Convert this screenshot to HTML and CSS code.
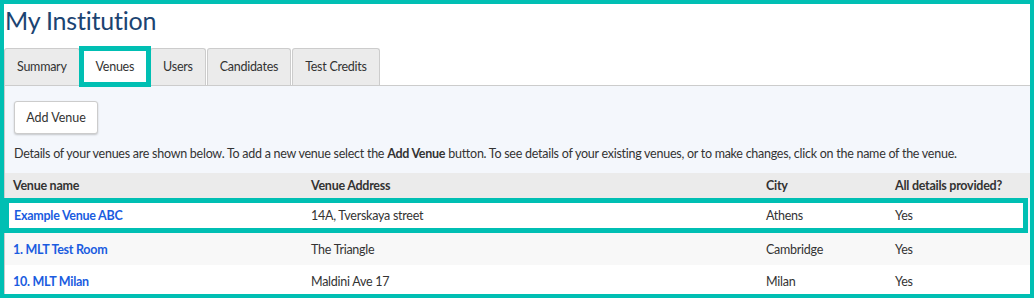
FILE: index.html
```html
<!DOCTYPE html>
<html lang="en">
  <head>
    <meta charset="UTF-8" />
    <meta name="viewport" content="width=device-width, initial-scale=1.0" />
    <title>My Institution</title>
    <link rel="stylesheet" href="styles.css">
  </head>
  <body>
    <div class="frame">
      <!-- Page title -->
      <h1>My Institution</h1>

      <!-- Tabs -->
      <nav class="tabs">
        <a class="tab" href="#">Summary</a>
        <a class="tab active" href="#">Venues</a>
        <a class="tab" href="#">Users</a>
        <a class="tab" href="#">Candidates</a>
        <a class="tab" href="#">Test Credits</a>
      </nav>

      <!-- Venues panel -->
      <section class="panel">
        <div class="intro">
          <button class="btn">Add Venue</button>
          <p>Details of your venues are shown below. To add a new venue select the <strong>Add Venue</strong> button. To see details of your existing venues, or to make changes, click on the name of the venue.</p>
        </div>

        <div class="venues">
          <div class="row head">
            <span>Venue name</span>
            <span>Venue Address</span>
            <span>City</span>
            <span>All details provided?</span>
          </div>
          <div class="row selected">
            <a href="#">Example Venue ABC</a>
            <span>14A, Tverskaya street</span>
            <span>Athens</span>
            <span>Yes</span>
          </div>
          <div class="row alt">
            <a href="#">1. MLT Test Room</a>
            <span>The Triangle</span>
            <span>Cambridge</span>
            <span>Yes</span>
          </div>
          <div class="row">
            <a href="#">10. MLT Milan</a>
            <span>Maldini Ave 17</span>
            <span>Milan</span>
            <span>Yes</span>
          </div>
        </div>
      </section>
    </div>
  </body>
</html>
```

FILE: styles.css
```css
/* ====================== RESET ====================== */
* {
  margin: 0;
  padding: 0;
  box-sizing: border-box;
}
body {
  font-family: "Lato", "Liberation Sans", sans-serif;
  font-size: 12.5px;
  letter-spacing: -0.26px;
  color: #333;
  background: #fff;
}

/* ===================== FRAME ===================== */
.frame {
  width: 1034px;
  height: 298px;
  border: 4px solid #00bfb3;
  overflow: hidden;
}
h1 {
  font-size: 25px;
  font-weight: normal;
  letter-spacing: -0.2px;
  line-height: 32px;
  color: #1b4472;
  padding-left: 1px;
  margin-bottom: 12px;
}

/* ===================== TABS ===================== */
.tabs {
  display: flex;
  align-items: flex-end;
  gap: 1px;
  height: 37px;
}
.tab {
  display: block;
  height: 37px;
  line-height: 35px;
  padding: 0 12px;
  background: #ebebeb;
  border: 1px solid #ccc;
  border-bottom: none;
  border-radius: 3px 3px 0 0;
  color: #333;
  text-decoration: none;
}
.tab.active {
  position: relative;
  z-index: 1;
  height: 41px;
  line-height: 31px;
  margin: 0 -2px -2px;
  padding: 0 12px;
  background: #fff;
  border: 5px solid #00bfb3;
  border-radius: 0;
}

/* ===================== PANEL ===================== */
.panel {
  background: #f4f7fc;
  border-top: 1px solid #ccc;
  border-left: 1px solid #ccc;
  height: 100%;
}
.intro {
  padding: 15px 9px 0;
}
.btn {
  font: inherit;
  color: #333;
  width: 84px;
  height: 33px;
  background: #fff;
  border: 1px solid #ccc;
  border-radius: 3px;
  box-shadow: 0 1px 2px rgba(0, 0, 0, 0.2);
}
.intro p {
  margin-top: 11px;
  line-height: 18px;
  white-space: nowrap;
}
.intro strong {
  font-weight: 700;
}

/* ===================== TABLE ===================== */
.venues {
  margin-top: 10px;
}
.row {
  display: grid;
  grid-template-columns: 298px 455px 129px 1fr;
  align-items: center;
  height: 32px;
  background: #fff;
}
.row > * {
  padding-left: 8px;
}
.row.head {
  height: 25px;
  background: #ebebeb;
  font-weight: 700;
}
.row.alt {
  height: 32px;
  background: #f8f8f8;
}
.row.selected {
  height: 35px;
  margin: 0 2px 0 -1px;
  border: 5px solid #00bfb3;
  grid-template-columns: 294px 455px 129px 1fr;
}
.row.selected > a {
  padding-left: 5px;
}
.row a {
  color: #1a5ce0;
  font-weight: 700;
  text-decoration: none;
}
```
